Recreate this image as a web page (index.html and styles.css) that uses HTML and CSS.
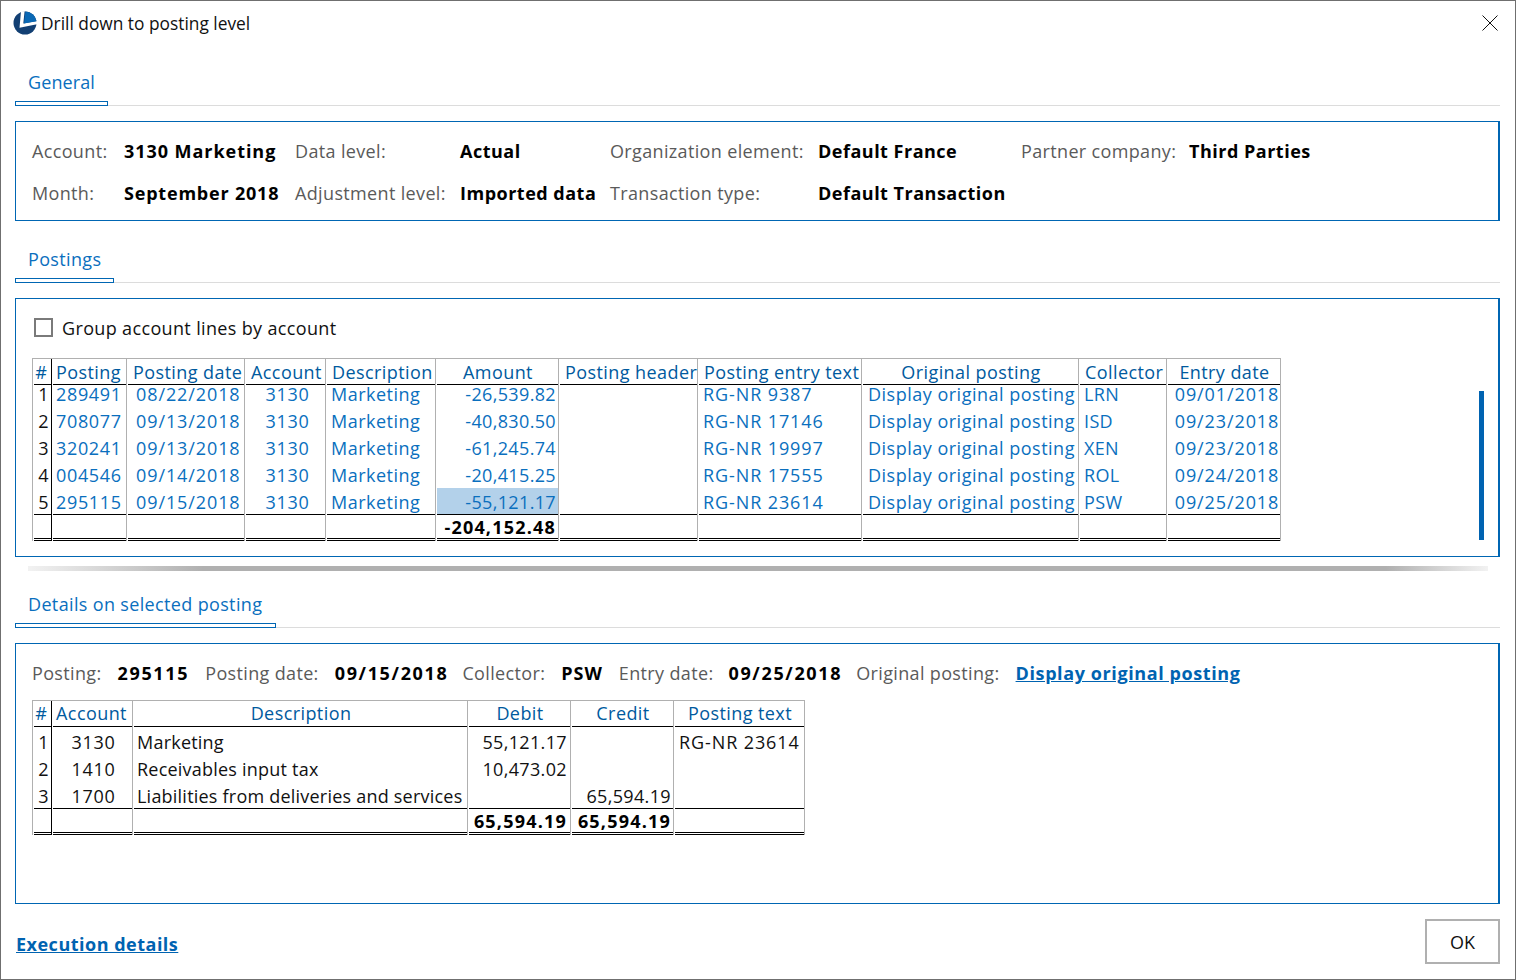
FILE: index.html
```html
<!DOCTYPE html>
<html lang="en">
<head>
<meta charset="utf-8">
<title>Drill down to posting level</title>
<link rel="stylesheet" href="styles.css">
</head>
<body>
<div class="window">
  <header class="titlebar">
    <svg class="logo" viewBox="0 0 24 24" width="24" height="24" aria-hidden="true">
      <circle cx="12" cy="12" r="11.5" fill="#123f73"/>
      <path d="M8 .3 L11.6 .3 L10.3 12.6 L24 10 L24 13.2 L6.5 16.8 Z" fill="#fff"/>
      <path d="M12.4 .5 A11.5 11.5 0 0 1 23.5 10.2 L11 12.4 Z" fill="#0a68b4"/>
    </svg>
    <h1 class="title">Drill down to posting level</h1>
    <svg class="close" viewBox="0 0 16 16" width="16" height="16" aria-hidden="true">
      <path d="M.5 .5 L15.5 15.5 M15.5 .5 L.5 15.5" stroke="#111" stroke-width="1" fill="none"/>
    </svg>
  </header>

  <main class="content">
    <div class="tabs tabs-first"><span class="tab">General</span></div>
    <section class="panel panel-info">
      <div class="info-grid">
        <span class="lbl">Account:</span><b class="val figures">3130 Marketing</b>
        <span class="lbl">Data level:</span><b class="val">Actual</b>
        <span class="lbl">Organization element:</span><b class="val">Default France</b>
        <span class="lbl">Partner company:</span><b class="val">Third Parties</b>
        <span class="lbl">Month:</span><b class="val month">September 2018</b>
        <span class="lbl">Adjustment level:</span><b class="val">Imported data</b>
        <span class="lbl">Transaction type:</span><b class="val">Default Transaction</b>
      </div>
    </section>

    <div class="tabs"><span class="tab">Postings</span></div>
    <section class="panel panel-postings">
      <label class="check-row"><span class="checkbox"></span><span>Group account lines by account</span></label>
      <table class="grid grid-postings">
        <colgroup>
          <col class="p1"><col class="p2"><col class="p3"><col class="p4"><col class="p5"><col class="p6"><col class="p7"><col class="p8"><col class="p9"><col class="p10"><col class="p11">
        </colgroup>
        <thead>
          <tr><th class="idx">#</th><th>Posting</th><th>Posting date</th><th>Account</th><th>Description</th><th>Amount</th><th>Posting header</th><th>Posting entry text</th><th>Original posting</th><th>Collector</th><th>Entry date</th></tr>
        </thead>
        <tbody class="links">
          <tr class="short"><td class="idx">1</td><td>289491</td><td class="c">08/22/2018</td><td class="c">3130</td><td>Marketing</td><td class="r">-26,539.82</td><td></td><td>RG-NR 9387</td><td class="c">Display original posting</td><td>LRN</td><td class="c">09/01/2018</td></tr>
          <tr><td class="idx">2</td><td>708077</td><td class="c">09/13/2018</td><td class="c">3130</td><td>Marketing</td><td class="r">-40,830.50</td><td></td><td>RG-NR 17146</td><td class="c">Display original posting</td><td>ISD</td><td class="c">09/23/2018</td></tr>
          <tr><td class="idx">3</td><td>320241</td><td class="c">09/13/2018</td><td class="c">3130</td><td>Marketing</td><td class="r">-61,245.74</td><td></td><td>RG-NR 19997</td><td class="c">Display original posting</td><td>XEN</td><td class="c">09/23/2018</td></tr>
          <tr><td class="idx">4</td><td>004546</td><td class="c">09/14/2018</td><td class="c">3130</td><td>Marketing</td><td class="r">-20,415.25</td><td></td><td>RG-NR 17555</td><td class="c">Display original posting</td><td>ROL</td><td class="c">09/24/2018</td></tr>
          <tr class="last"><td class="idx">5</td><td>295115</td><td class="c">09/15/2018</td><td class="c">3130</td><td>Marketing</td><td class="r selected">-55,121.17</td><td></td><td>RG-NR 23614</td><td class="c">Display original posting</td><td>PSW</td><td class="c">09/25/2018</td></tr>
        </tbody>
        <tfoot>
          <tr><td class="idx"></td><td></td><td></td><td></td><td></td><td class="r">-204,152.48</td><td></td><td></td><td></td><td></td><td></td></tr>
        </tfoot>
      </table>
      <div class="scrollbar"></div>
    </section>

    <div class="splitter"></div>

    <div class="tabs tabs-details"><span class="tab">Details on selected posting</span></div>
    <section class="panel panel-details">
      <div class="detail-row">
        <span class="lbl">Posting:</span><b class="val wide">295115</b>
        <span class="lbl">Posting date:</span><b class="val wide date">09/15/2018</b>
        <span class="lbl">Collector:</span><b class="val code">PSW</b>
        <span class="lbl">Entry date:</span><b class="val wide date entry">09/25/2018</b>
        <span class="lbl">Original posting:</span><a class="strong-link" href="#">Display original posting</a>
      </div>
      <table class="grid grid-details">
        <colgroup>
          <col class="d1"><col class="d2"><col class="d3"><col class="d4"><col class="d5"><col class="d6">
        </colgroup>
        <thead>
          <tr><th class="idx">#</th><th>Account</th><th>Description</th><th>Debit</th><th>Credit</th><th>Posting text</th></tr>
        </thead>
        <tbody>
          <tr><td class="idx">1</td><td class="c">3130</td><td>Marketing</td><td class="r">55,121.17</td><td class="r"></td><td>RG-NR 23614</td></tr>
          <tr><td class="idx">2</td><td class="c">1410</td><td>Receivables input tax</td><td class="r">10,473.02</td><td class="r"></td><td></td></tr>
          <tr class="last"><td class="idx">3</td><td class="c">1700</td><td>Liabilities from deliveries and services</td><td class="r"></td><td class="r">65,594.19</td><td></td></tr>
        </tbody>
        <tfoot>
          <tr><td class="idx"></td><td></td><td></td><td class="r">65,594.19</td><td class="r">65,594.19</td><td></td></tr>
        </tfoot>
      </table>
    </section>

    <footer class="footer">
      <a class="strong-link" href="#">Execution details</a>
      <button class="ok" type="button">OK</button>
    </footer>
  </main>
</div>
</body>
</html>
```
FILE: styles.css
```css
* { box-sizing: border-box; }
html, body { margin: 0; padding: 0; height: 100%; }
body {
  background: #fff;
  font-family: "Open Sans", "Noto Sans", sans-serif;
  font-size: 18px;
  letter-spacing: .35px;
  color: #111;
}
.window {
  width: 1516px;
  height: 980px;
  border: 1px solid #6f6f6f;
  display: flex;
  flex-direction: column;
  overflow: hidden;
}
.titlebar {
  height: 46px;
  flex: none;
  display: flex;
  align-items: center;
  padding: 0 17px 0 12px;
}
.logo { flex: none; margin-top: -3px; }
.title {
  margin: -2px 0 0 4px;
  font-size: 17.33px;
  font-weight: 400;
  letter-spacing: 0;
  color: #111;
}
.close { margin-left: auto; margin-top: -3px; }

.content {
  flex: 1;
  min-height: 0;
  display: flex;
  flex-direction: column;
  padding: 0 15px 0 14px;
}
.tabs {
  flex: none;
  height: 62px;
  display: flex;
  align-items: flex-end;
  border-bottom: 1px solid #dcdcdc;
  margin-bottom: 15px;
}
.tabs-first { height: 59px; }
.tabs-details { height: 57px; }
.tab {
  position: relative;
  padding: 0 13px 11px;
  line-height: 24px;
  color: #0a6fbe;
}
.tabs-first .tab { letter-spacing: .1px; }
.tabs-details .tab { padding-right: 14px; }
.tab::after {
  content: "";
  position: absolute;
  left: 0;
  right: 0;
  bottom: -1px;
  height: 3px;
  background: #fff;
  border: 1px solid #0066b3;
}

.panel {
  position: relative;
  flex: none;
  border: 1px solid #0066b3;
  border-right-width: 2px;
  padding: 0 16px;
}
.panel-info { height: 100px; padding-top: 18px; }
.panel-postings { height: 259px; }
.panel-details { flex: 1; min-height: 0; }

.lbl { color: #5a5a5a; line-height: 22px; white-space: nowrap; }
.val { color: #000; font-weight: 700; letter-spacing: .5px; line-height: 22px; white-space: nowrap; }
.val.figures { letter-spacing: .95px; }
.val.month { letter-spacing: .8px; }
.val.wide { letter-spacing: 1.65px; }
.val.date { margin-right: -2px; }
.val.entry { margin-left: -1px; }
.val.code { letter-spacing: 1px; }

.info-grid {
  display: grid;
  grid-template-columns: 92px 171px 165px 150px 208px 203px 168px auto;
  justify-content: start;
  row-gap: 20px;
}

.check-row {
  height: 57px;
  margin-bottom: 2px;
  display: flex;
  align-items: center;
  gap: 9px;
  padding: 0 0 0 2px;
}
.checkbox {
  width: 19px;
  height: 19px;
  border: 2px solid #7a7a7a;
  background: #fff;
}

.grid {
  border-collapse: separate;
  border-spacing: 0;
  table-layout: fixed;
  border-top: 1px solid #b0b0b0;
  border-left: 1px solid #b0b0b0;
}
.grid-postings { width: 1248px; }
.grid-details { width: 772px; }
.p1 { width: 19px; } .p2 { width: 75px; } .p3 { width: 118px; } .p4 { width: 81px; }
.p5 { width: 110px; } .p6 { width: 123px; } .p7 { width: 139px; } .p8 { width: 164px; }
.p9 { width: 217px; } .p10 { width: 88px; } .p11 { width: 114px; }
.d1 { width: 19px; } .d2 { width: 81px; } .d3 { width: 335px; } .d4 { width: 103px; }
.d5 { width: 103px; } .d6 { width: 131px; }

.grid th, .grid td {
  padding: 0 4px 0 5px;
  border-right: 1px solid #b0b0b0;
  white-space: nowrap;
  overflow: visible;
}
.grid th {
  height: 26px;
  padding-left: 6px;
  line-height: 21px;
  font-weight: 400;
  letter-spacing: .42px;
  text-align: center;
  color: #005a9e;
  vertical-align: middle;
  background: linear-gradient(#000, #000) no-repeat 1px 100% / calc(100% - 1px) 1px;
}
.grid th:nth-child(2) { padding-left: 3px; }
.grid-details th { padding-bottom: 2px; }
.grid td { height: 27px; line-height: 17px; padding-bottom: 4px; vertical-align: bottom; }
.grid .short td { height: 22px; }
.grid-details tbody tr:first-child td { height: 28px; }
.grid .idx {
  border-right-color: #000;
  padding-left: 2px;
  padding-right: 2px;
  text-align: right;
}
.grid th.idx { text-align: center; letter-spacing: 0; padding-right: 4px; }
.grid .c { text-align: center; }
.grid .r { text-align: right; padding-right: 3px; }
.links td { color: #0a6fbe; }
.links td.idx { color: #111; }

/* Wide figures in the value columns */
.grid-postings tbody td:nth-child(2) { letter-spacing: .65px; padding-left: 4px; }
.grid-postings tbody td:nth-child(4) { letter-spacing: .65px; padding-left: 9px; }
.grid-postings tbody td:nth-child(3) { letter-spacing: .9px; padding-left: 9px; }
.grid-postings tbody td:nth-child(11) { letter-spacing: .9px; padding-left: 7px; padding-right: 0; }
.grid-postings tbody td:nth-child(8),
.grid-details tbody td:nth-child(6) { letter-spacing: .9px; }
.grid-postings tbody td:nth-child(5) { letter-spacing: .5px; }
.grid-postings tbody td:nth-child(9) { letter-spacing: .5px; padding-left: 6px; }
.grid-postings tbody td.r { padding-right: 2px; }
.grid-details tbody td:nth-child(3) { letter-spacing: .22px; padding-left: 4px; }
.grid-details tbody td:nth-child(2) { letter-spacing: .65px; padding-left: 7px; }
.grid-details tbody td:nth-child(5) { padding-right: 2px; }

.grid .last td {
  background: linear-gradient(#000, #000) no-repeat 1px 100% / calc(100% - 1px) 1px;
}
.grid .last td.selected {
  background:
    linear-gradient(#000, #000) no-repeat 1px 100% / calc(100% - 1px) 1px,
    linear-gradient(#b3d1ea, #b3d1ea) no-repeat 1px 0 / calc(100% - 1px) 100%;
}
.grid tfoot td {
  height: 26px;
  padding-bottom: 0;
  font-weight: 700;
  letter-spacing: 1.2px;
  color: #000;
  vertical-align: top;
  line-height: 25px;
  background:
    linear-gradient(#000, #000) no-repeat 1px 100% / calc(100% - 1px) 1px,
    linear-gradient(#000, #000) no-repeat 1px calc(100% - 2px) / calc(100% - 1px) 1px;
}
.grid-postings tfoot td.r,
.grid-details tfoot td.r:nth-child(5) { padding-right: 2px; }

.scrollbar {
  position: absolute;
  right: 14px;
  top: 92px;
  bottom: 16px;
  width: 5px;
  background: #0063b1;
}

.splitter {
  flex: none;
  height: 5px;
  margin: 9px 12px 0 13px;
  background: linear-gradient(90deg, #f2f2f2, #b0b0b0 12%, #b0b0b0 93%, #f2f2f2);
}

.detail-row {
  height: 56px;
  padding-top: 2px;
  display: flex;
  align-items: center;
  gap: 16px;
}
.strong-link {
  color: #0063b1;
  font-weight: 700;
  letter-spacing: .6px;
  text-decoration: underline;
  white-space: nowrap;
}

.footer {
  flex: none;
  height: 75px;
  display: flex;
  align-items: flex-start;
  justify-content: space-between;
  padding-top: 15px;
}
.footer .strong-link { margin: 13px 0 0 1px; letter-spacing: .5px; }
.ok {
  width: 75px;
  height: 45px;
  background: #fff;
  border: 2px solid #b0b0b0;
  font: inherit;
  color: #111;
  padding: 0;
}
```
